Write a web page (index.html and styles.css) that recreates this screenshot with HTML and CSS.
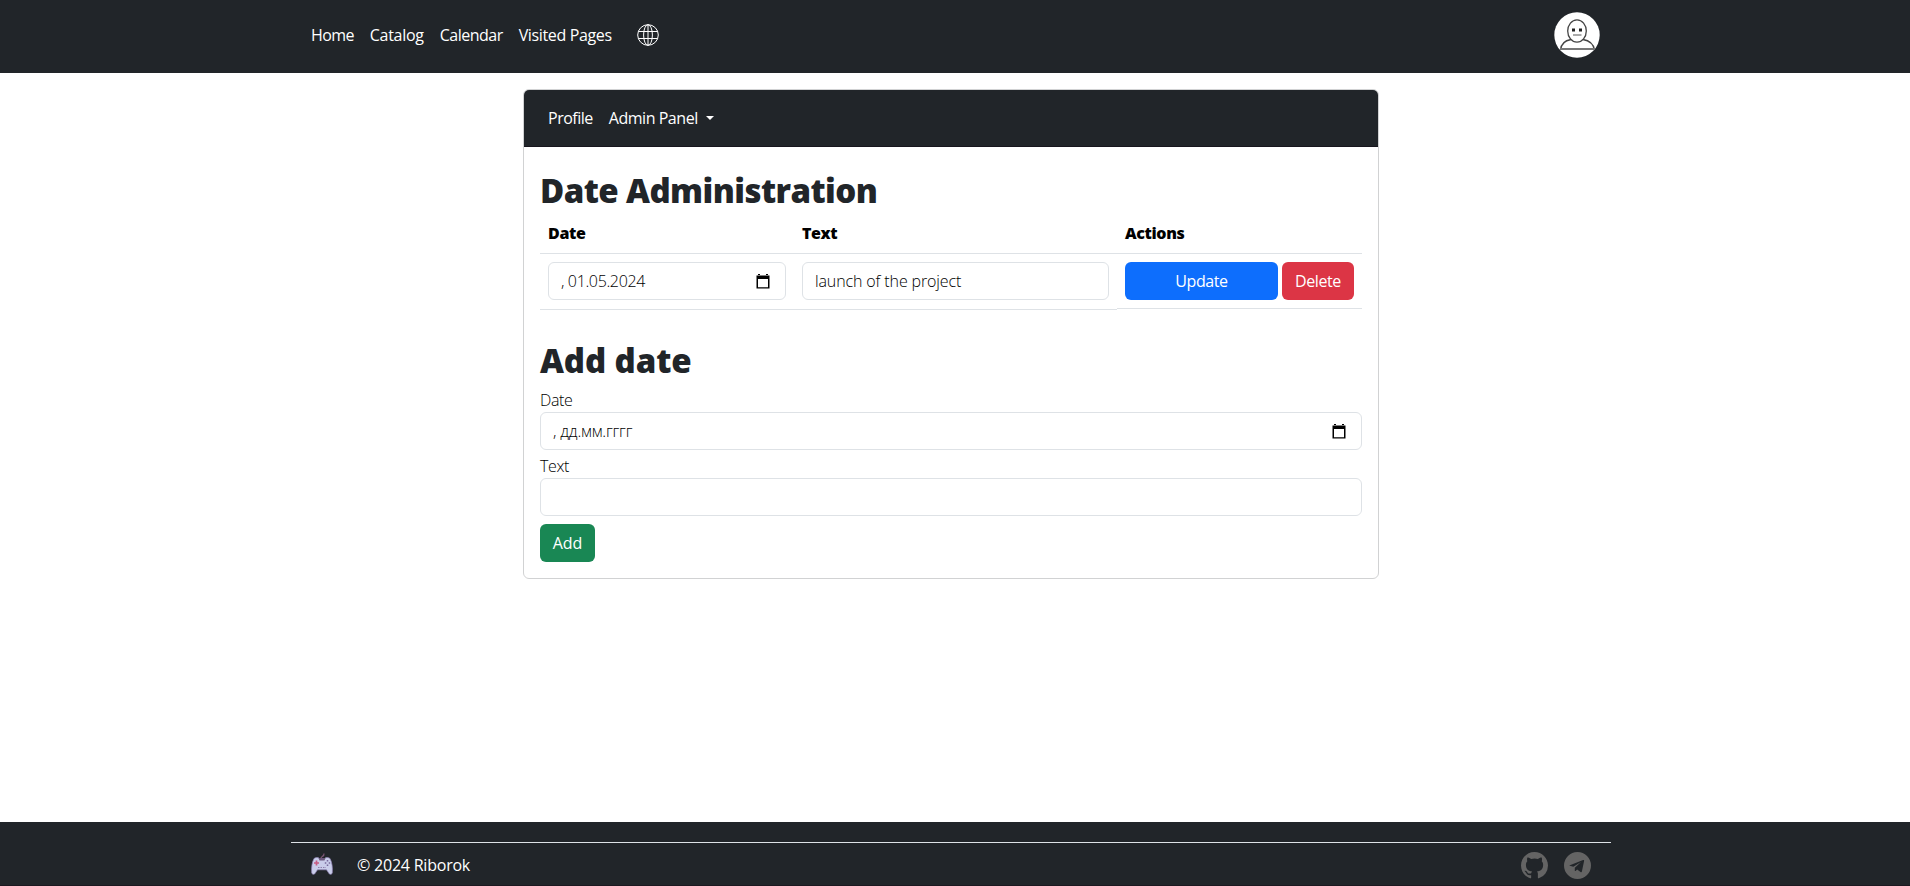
FILE: index.html
```
<!DOCTYPE html>
<html lang="en">
<head>
<meta charset="utf-8">
<title>Date Administration</title>
<link rel="stylesheet" href="styles.css">
</head>
<body>
<header class="topbar">
  <div class="container topbar-inner">
    <nav class="nav">
      <a class="nav-home">Home</a><a class="nav-catalog">Catalog</a><a class="nav-calendar">Calendar</a><a class="nav-visited">Visited Pages</a>
      <svg class="globe" width="22" height="22" viewBox="0 0 22 22" fill="none" stroke="#fff" stroke-width="1"><circle cx="11" cy="11" r="10.3"/><ellipse cx="11" cy="11" rx="4.4" ry="10.3"/><path d="M11 .7v20.6M1.5 7.5h19M1.5 14.5h19"/></svg>
    </nav>
    <svg class="avatar" width="46" height="46" viewBox="0 0 46 46"><circle cx="23" cy="23" r="22.7" fill="#fff"/><g fill="none" stroke="#444" stroke-width="1.3"><path d="M6.500 38C7 32 11 28.500 17 27.500M29 27.500C35 28.500 39.500 32 40.500 38"/><ellipse cx="23" cy="19" rx="9.300" ry="11.200"/></g><path d="M6 37h35" stroke="#777" stroke-width="2"/><path d="M18 16.500h3v3h-3zM25 16.500h3v3h-3z" fill="#222"/><path d="M19 23h8.500" stroke="#aaa" stroke-width="2"/></svg>
  </div>
</header>
<main class="card">
  <nav class="card-nav"><a class="nav-profile">Profile</a><a class="nav-admin">Admin Panel</a><i class="caret"></i></nav>
  <div class="card-body">
    <h1 class="title title-admin"><span>Date Administration</span></h1>
    <div class="table">
      <div class="th"><span class="th-date">Date</span></div><div class="th"><span class="th-text">Text</span></div><div class="th"><span class="th-actions">Actions</span></div>
      <div class="td"><div class="input"><span class="val-date">, 01.05.2024</span><svg class="cal" width="14" height="15" viewBox="0 0 14 15"><path d="M2 0h2v2H2zM10 0h2v2h-2zM.5 1.500h13v13H.5zM2 5v8.200h10V5z" fill="#000" fill-rule="evenodd"/></svg></div></div>
      <div class="td"><div class="input"><span class="val-launch">launch of the project</span></div></div>
      <div class="td td-actions"><button class="btn btn-update"><span>Update</span></button><button class="btn btn-delete"><span>Delete</span></button></div>
    </div>
    <h1 class="title title-add"><span>Add date</span></h1>
    <label class="label"><span class="lab-date">Date</span></label>
    <div class="input"><span class="val-mask">, дд.мм.гггг</span><svg class="cal" width="14" height="15" viewBox="0 0 14 15"><path d="M2 0h2v2H2zM10 0h2v2h-2zM.5 1.500h13v13H.5zM2 5v8.200h10V5z" fill="#000" fill-rule="evenodd"/></svg></div>
    <label class="label label-second"><span class="lab-text">Text</span></label>
    <div class="input"></div>
    <button class="btn btn-add"><span>Add</span></button>
  </div>
</main>
<footer class="footer">
  <div class="container footer-inner">
    <svg class="pad" width="22" height="22" viewBox="0 0 22 22"><path d="M10 5.500C9.500 3 13.500 4 13 .5" fill="none" stroke="#7d5575" stroke-width="1.200"/><path d="M3 5.500C5 4 7.500 4.500 8.500 5.500h5C14.500 4.500 17 4 19 5.500 21 9 21.800 15 21.300 20c-.8 2-3 1.600-3.600 0L15.500 16.800h-9L4.300 20c-.6 1.600-2.800 2-3.600 0C.2 15 1 9 3 5.500z" fill="#c9cdea" stroke="#8f83b5" stroke-width=".7"/><path d="M7.500 5h7l-1 2.500h-5z" fill="#6b587c"/><path d="M5.500 7.500v5M3 10h5" stroke="#c75c83" stroke-width="1.700"/><path d="M16.500 7v1.500M16.500 11.500V13M13.800 10h1.500M17.700 10h1.500" stroke="#77699b" stroke-width="1.500"/><path d="M7 14.500h8" stroke="#8c7fab" stroke-dasharray="1.500 1"/></svg>
    <span class="copy">© 2024 Riborok</span>
    <div class="social">
      <svg width="27" height="27" viewBox="0 0 16 16" fill="#646464"><path d="M8 0C3.580 0 0 3.580 0 8c0 3.540 2.290 6.530 5.470 7.590.4.070.55-.17.55-.38 0-.19-.01-.82-.01-1.490-2.010.37-2.530-.49-2.690-.94-.09-.23-.48-.94-.82-1.130-.28-.15-.68-.52-.01-.53.63-.01 1.080.58 1.230.82.72 1.210 1.870.87 2.330.66.070-.52.28-.87.51-1.070-1.780-.2-3.640-.89-3.640-3.950 0-.87.31-1.590.82-2.150-.08-.2-.36-1.020.08-2.120 0 0 .67-.21 2.200.82a7.600 7.600 0 0 1 4 0c1.530-1.040 2.200-.82 2.200-.82.44 1.100.16 1.920.08 2.120.51.56.82 1.270.82 2.150 0 3.070-1.870 3.750-3.650 3.950.29.25.54.73.54 1.480 0 1.070-.01 1.930-.01 2.200 0 .21.15.46.55.38A8 8 0 0 0 16 8c0-4.420-3.580-8-8-8z"/></svg>
      <svg width="27" height="27" viewBox="0 0 16 16" fill="#646464"><path fill-rule="evenodd" d="M16 8A8 8 0 1 1 0 8a8 8 0 0 1 16 0zM3.500 7.800 11.300 4.700c.4-.1.700.1.600.6l-1.300 6.200c-.1.500-.4.600-.8.300L7.800 10.300l-1 .9c-.2.200-.4.100-.4-.2V9.300l3.700-3.400-4.600 2.900-2-.6c-.4-.1-.4-.3 0-.4z"/></svg>
    </div>
  </div>
</footer>
</body>
</html>
```
FILE: styles.css
```
* { box-sizing: border-box; }
body { margin: 0; height: 886px; display: flex; flex-direction: column; background: #fff; color: #212529; font: 16px/24px "Open Sans", "Noto Sans", sans-serif; overflow: hidden; }
span, a { white-space: nowrap; }
.container { width: 1320px; margin-left: 291px; }
.topbar { height: 73px; background: #212529; color: #fff; flex: none; }
.topbar-inner { display: flex; justify-content: space-between; padding: 11px 11px 0 20px; }
.nav { display: flex; align-items: center; height: 47px; gap: 16px; color: #fff; }
.nav-home { letter-spacing: -.6px; }
.nav-catalog { letter-spacing: -.3px; }
.nav-calendar { letter-spacing: -.5px; }
.nav-visited { letter-spacing: -.36px; }
.nav-profile { letter-spacing: -.5px; }
.nav-admin { letter-spacing: -.46px; }
.globe { margin-left: 9px; }
.avatar { display: block; margin-top: 1px; }
.card { width: 856px; height: 490px; margin: 16px 0 0 523px; border: 1px solid #d1d2d3; border-radius: 6px; overflow: hidden; flex: none; }
.card-nav { height: 57px; display: flex; align-items: center; gap: 16px; padding: 0 24px; background: #212529; border-bottom: 1px solid #17151d; color: #fff; }
.caret { border: 4px solid transparent; border-top-color: #fff; border-bottom: 0; margin-left: -8px; }
.card-body { padding: 23px 16px 16px; }
.title { margin: 0; font-size: 33px; line-height: 42px; font-weight: 800; }
.title-admin { letter-spacing: -.57px; }
.title-add { letter-spacing: -.1px; margin-top: 30px; }
.table { display: grid; grid-template-columns: 254px 323px 245px; color: #000; margin-top: 1px; }
.th { height: 41px; padding: 8px; border-bottom: 1px solid #dee2e6; font-weight: 800; letter-spacing: -.36px; }
.td { height: 56px; padding: 8px; border-bottom: 1px solid #dee2e6; }
.td-actions { height: 55px; display: flex; gap: 4px; }
.input { height: 38px; border: 1px solid #dee2e6; border-radius: 6px; display: flex; align-items: center; justify-content: space-between; padding: 0 15px 0 12px; color: #000; font-weight: 300; }
.val-date { letter-spacing: -.36px; }
.val-launch { letter-spacing: -.12px; }
.val-mask { letter-spacing: -.17px; }
.cal { flex: none; }
.btn { display: block; height: 38px; border: 0; border-radius: 6px; padding: 0; color: #fff; font: inherit; flex: none; letter-spacing: -.42px; }
.btn-update { width: 153px; background: #0d6efd; }
.btn-delete { width: 72px; background: #dc3545; }
.btn-add { width: 55px; background: #198754; margin-top: 8px; letter-spacing: -.1px; }
.label { display: block; height: 24px; color: #000; font-weight: 300; margin-top: 6px; letter-spacing: -.35px; }
.label-second { margin-top: 4px; }
.footer { height: 64px; margin-top: auto; background: #212529; color: #fff; padding-top: 20px; border-bottom: 1px solid #1c1820; flex: none; }
.footer-inner { height: 46px; border-top: 1px solid #dee2e6; display: flex; align-items: center; padding: 0 20px; }
.pad { margin-top: -3px; }
.copy { margin-left: 24px; letter-spacing: -.22px; margin-top: -1px; }
.social { display: flex; gap: 16px; margin-left: auto; }
```
